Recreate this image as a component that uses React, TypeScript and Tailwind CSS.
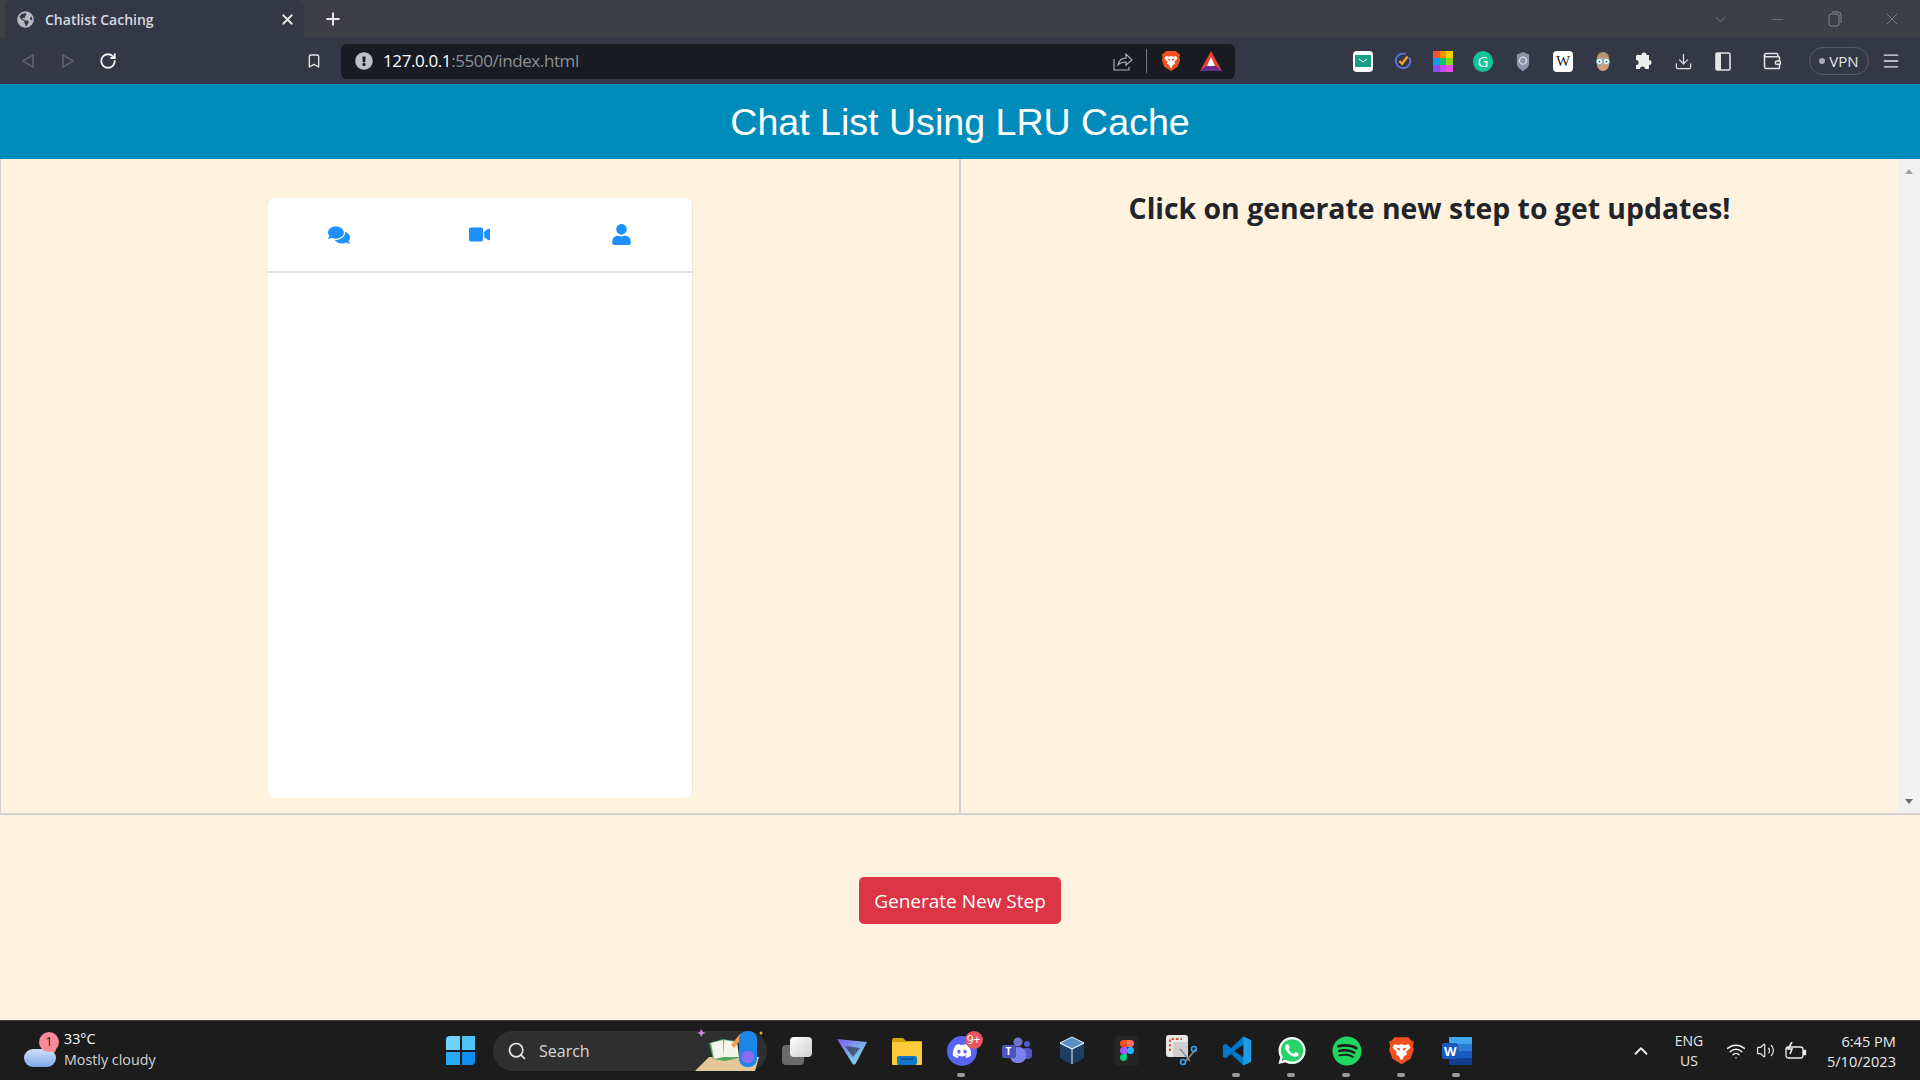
import React from "react";
import { FaComments, FaVideo, FaUser, FaDiscord, FaWhatsapp, FaSpotify, FaGlobeAmericas, FaExclamationCircle } from "react-icons/fa";
import { Plus, X, ChevronDown, ChevronUp, Minus, RotateCw, Bookmark, Download, Wallet, Menu, Search, Wifi, Volume2 } from "lucide-react";

const ui = { fontFamily: '"Open Sans", "Noto Sans", sans-serif' };

function Brave({ size = 24 }: { size?: number }) {
  return (
    <svg width={size} height={size * 1.1} viewBox="0 0 24 26">
      <path d="M6 1h12l3 3 2 1-1 4 1 3-3 8-8 5-8-5-3-8 1-3-1-4 2-1z" fill="#f1501e" />
      <path d="M6 7l3 1 3-1 3 1 3-1 2 3-4 4 1 2-3 2-1 3h-2l-1-3-3-2 1-2-4-4z" fill="#fff" />
      <path d="M7 10l4 1-1 2zM17 10l-4 1 1 2z" fill="#f1501e" />
    </svg>
  );
}

function ToolSlot({ children }: { children: React.ReactNode }) {
  return <div className="w-10 flex justify-center items-center shrink-0">{children}</div>;
}

function TaskSlot({ children, dot }: { children: React.ReactNode; dot?: boolean }) {
  return (
    <div className="w-[55px] h-full relative flex items-center justify-center shrink-0">
      {children}
      {dot && <div className="absolute bottom-[3px] left-[23px] w-2 h-[4px] rounded-full bg-[#9a9a9a]" />}
    </div>
  );
}

function TabStrip() {
  return (
    <div className="h-[38px] bg-[#3e3e47] flex items-end shrink-0">
      <div className="ml-[5px] w-[299px] h-[38px] bg-[#333746] rounded-t-md flex items-center text-[#d8dae0] pl-[12px] pr-[8px]">
        <FaGlobeAmericas size={17} className="text-[#b5b8c0]" />
        <span className="ml-[11px] text-[14px] font-semibold" style={ui}>Chatlist Caching</span>
        <X size={17} strokeWidth={2.5} className="ml-auto text-[#e8e8ea]" />
      </div>
      <div className="h-[38px] ml-[19px] flex items-center text-[#e8e8ea]"><Plus size={20} strokeWidth={2.4} /></div>
      <div className="ml-auto h-[38px] flex items-center text-[#85858e]">
        <div className="w-[57px] flex justify-center"><ChevronDown size={17} strokeWidth={1} /></div>
        <div className="w-[57px] flex justify-center"><Minus size={17} strokeWidth={1} /></div>
        <div className="w-[57px] flex justify-center">
          <svg width="14" height="17" viewBox="0 0 14 17" fill="none" stroke="currentColor"><rect x="1" y="3" width="10" height="12" rx="2" /><path d="M4 1h6a3 3 0 0 1 3 3v8" /></svg>
        </div>
        <div className="w-[57px] flex justify-center"><X size={20} strokeWidth={1} /></div>
      </div>
    </div>
  );
}

function Toolbar() {
  return (
    <div className="h-[46px] bg-[#333746] flex items-center shrink-0">
      <div className="ml-[8px] w-10 flex justify-center text-[#5f626d]">
        <svg width="14" height="16" viewBox="0 0 14 16" fill="none" stroke="currentColor" strokeWidth="1.6"><path d="M12 2v12L2 8z" strokeLinejoin="round" /></svg>
      </div>
      <div className="w-10 flex justify-center text-[#5f626d]">
        <svg width="14" height="16" viewBox="0 0 14 16" fill="none" stroke="currentColor" strokeWidth="1.6"><path d="M2 2v12l10-6z" strokeLinejoin="round" /></svg>
      </div>
      <div className="w-10 flex justify-center text-[#eeeef0]"><RotateCw size={18} strokeWidth={2.4} /></div>
      <div className="ml-[178px] w-4 flex justify-center text-[#e4e5e8]"><Bookmark size={18} strokeWidth={2} /></div>
      <div className="ml-[19px] w-[894px] h-[35px] bg-[#181b22] rounded-md flex items-center pl-[14px] pr-[12px]">
        <FaExclamationCircle size={18} className="text-[#bfc0c5]" />
        <span className="ml-[10px] text-[17px] tracking-[-0.4px] text-white" style={ui}>127.0.0.1<span className="text-[#8d8f96]">:5500/index.html</span></span>
        <div className="ml-auto flex items-center">
          <svg width="20" height="22" viewBox="0 0 20 22" fill="none" stroke="#b4b5ba" strokeWidth="1.1"><path d="M1 9v11h15v-3" /><path d="M5 15c1-5 4-7 8-7V4l6 6-6 5v-3c-3 0-6 1-8 3z" /></svg>
          <div className="ml-[13px] w-px h-6 bg-[#77787e]" />
          <div className="ml-[14px]"><Brave size={20} /></div>
          <svg className="ml-[18px]" width="24" height="24" viewBox="0 0 24 24"><path d="M12 2L23 22H1z" fill="#ef3f33" /><path d="M1 22l6-5h10l6 5z" fill="#662d91" /><path d="M12 8l4 9H8z" fill="#fff" /></svg>
        </div>
      </div>
      <div className="ml-[108px] flex items-center">
        <ToolSlot>
          <div className="w-5 h-[21px] rounded-sm bg-white flex items-center justify-center"><div className="w-4 h-3 bg-[#17a086] flex items-center justify-center"><svg width="10" height="6" viewBox="0 0 10 6" fill="none" stroke="#fff"><path d="M1 1l4 3 4-3" /></svg></div></div>
        </ToolSlot>
        <ToolSlot>
          <svg width="18" height="20" viewBox="0 0 20 22" fill="none"><path d="M17 7a8 8 0 1 1-4-3.500" stroke="#5a78e0" strokeWidth="2" /><path d="M6 11l3 3 6-8" stroke="#f5a623" strokeWidth="2.500" /></svg>
        </ToolSlot>
        <ToolSlot>
          <div className="w-5 h-[21px] grid grid-cols-3 grid-rows-3">
            <div className="bg-[#f2552c]" /><div className="bg-[#fb8c00]" /><div className="bg-[#fdd000]" />
            <div className="bg-[#1198f0]" /><div className="bg-[#0cc46c]" /><div className="bg-[#8bd11d]" />
            <div className="bg-[#8b4df0]" /><div className="bg-[#c04df5]" /><div className="bg-[#e84df0]" />
          </div>
        </ToolSlot>
        <ToolSlot>
          <div className="w-5 h-[21px] rounded-full bg-[#15c39a] flex items-center justify-center text-white text-[15px]" style={ui}>G</div>
        </ToolSlot>
        <ToolSlot>
          <svg width="16" height="21" viewBox="0 0 16 24"><path d="M8 1l7 3v10c0 5-4 7-7 9-3-2-7-4-7-9V4z" fill="#8a93a8" /><circle cx="8" cy="11" r="4" fill="none" stroke="#dfe3ea" strokeWidth="1.500" /></svg>
        </ToolSlot>
        <ToolSlot>
          <div className="w-5 h-[21px] rounded-sm bg-white text-[#222] text-[15px] flex items-center justify-center"><span style={{ fontFamily: '"Liberation Serif", serif' }}>W</span></div>
        </ToolSlot>
        <ToolSlot>
          <svg width="18" height="21" viewBox="0 0 20 24"><circle cx="10" cy="8" r="7" fill="#b8916a" /><ellipse cx="10" cy="15" rx="7" ry="8" fill="#cf9a80" /><circle cx="6" cy="12" r="3.500" fill="#fff" stroke="#59b5c9" /><circle cx="14" cy="12" r="3.500" fill="#fff" stroke="#59b5c9" /><circle cx="6" cy="12" r="1" fill="#333" /><circle cx="14" cy="12" r="1" fill="#333" /></svg>
        </ToolSlot>
        <ToolSlot>
          <svg width="18" height="20" viewBox="0 0 18 20" fill="#eceded"><path d="M5 4h2.500a2.500 2.500 0 1 1 5 0H15v5a2.500 2.500 0 1 1 0 5v4h-4a2.500 2.500 0 1 0-5 0H2v-4a2.500 2.500 0 1 0 0-5V6a2 2 0 0 1 3-2z" /></svg>
        </ToolSlot>
        <ToolSlot><Download size={19} strokeWidth={1.5} className="text-[#e4e5e8]" /></ToolSlot>
        <ToolSlot>
          <svg width="16" height="19" viewBox="0 0 16 19"><rect x="1" y="1" width="14" height="17" rx="1.500" fill="none" stroke="#e4e5e8" strokeWidth="1.600" /><rect x="1" y="1" width="5" height="17" fill="#e4e5e8" /></svg>
        </ToolSlot>
        <div className="w-[58px] flex justify-center"><Wallet size={20} strokeWidth={1.8} className="text-[#e4e5e8]" /></div>
        <div className="ml-[8px] w-[60px] h-[28px] rounded-full border border-[#575a68] flex items-center justify-center text-[#e4e5e8] text-[15px]" style={ui}>
          <span className="w-[6px] h-[6px] rounded-full bg-[#a8aab2] mr-[4px]" />VPN
        </div>
        <div className="ml-[6px] w-[32px] flex justify-center"><Menu size={20} strokeWidth={1.6} className="text-[#e4e5e8]" /></div>
      </div>
    </div>
  );
}

function Scrollbar() {
  return (
    <div className="w-[22px] bg-[#f1f1f1] flex flex-col justify-between items-center pt-[10px] pb-[9px] shrink-0">
      <div className="w-0 h-0 border-x-[4.5px] border-x-transparent border-b-[5px] border-b-[#a3a3a3]" />
      <div className="w-0 h-0 border-x-[4.5px] border-x-transparent border-t-[5px] border-t-[#6b6b6b]" />
    </div>
  );
}

function Panels() {
  return (
    <div className="h-[656px] flex border-b-2 border-[#d3d3d3] shrink-0">
      <div className="w-[961px] border-l border-r-2 border-[#d3d3d3] pl-[267px] pt-[39px] shrink-0">
        <div className="w-[425px] h-[600px] bg-white rounded-lg border-r border-[#e8e8e8]">
          <div className="h-[75px] border-b-2 border-[#e0e0e0] flex items-center text-[#1e90ff]">
            <div className="flex-1 flex justify-center"><FaComments size={22} /></div>
            <div className="flex-1 flex justify-center"><FaVideo size={21} /></div>
            <div className="flex-1 flex justify-center"><FaUser size={21} /></div>
          </div>
        </div>
      </div>
      <div className="flex-1 text-center pt-[28px]">
        <h2 className="text-[28.4px] font-bold text-[#212529] leading-[42px]" style={ui}>Click on generate new step to get updates!</h2>
      </div>
      <Scrollbar />
    </div>
  );
}

function Taskbar() {
  return (
    <div className="h-[60px] bg-[#1c1c1c] border-t border-[#3a3a3a] flex items-center shrink-0 text-white relative" style={ui}>
      <div className="w-[433px] h-full flex items-center pl-[24px] shrink-0">
        <div className="relative w-[40px] h-[40px]">
          <div className="absolute left-[24px] top-[14px] w-[8px] h-[8px] rounded-full bg-[#e8862a]" />
          <div className="absolute left-0 bottom-[4px] w-[32px] h-[18px] rounded-full bg-gradient-to-b from-[#cfe0f7] to-[#7fa8e8]" />
          <div className="absolute left-[15px] top-[1px] w-[20px] h-[20px] rounded-full bg-[#f98b97] text-[#222] text-[13px] flex items-center justify-center">1</div>
        </div>
        <div className="text-[14.3px] leading-[21px] mb-[3px]">
          <div>33°C</div>
          <div className="text-[#d4d4d4]">Mostly cloudy</div>
        </div>
      </div>
      <div className="w-[55px] h-full flex items-center justify-center shrink-0">
        <div className="w-[29px] h-[29px] grid grid-cols-2 gap-[2px]">
          <div className="bg-[#6fd3fb] rounded-tl-sm" /><div className="bg-[#4fc3f7]" /><div className="bg-[#29a8f5]" /><div className="bg-[#0f8cf0] rounded-br-sm" />
        </div>
      </div>
      <div className="ml-[5px] w-[274px] h-[40px] rounded-full bg-[#2f2f2f] flex items-center pl-[14px] relative shrink-0">
        <Search size={20} strokeWidth={2} className="text-[#e8e8e8]" />
        <span className="ml-[12px] text-[16px] text-[#d8d8d8]">Search</span>
        <svg className="absolute right-0 -top-[6px]" width="72" height="46" viewBox="0 0 72 46">
          <path d="M0 46l14-14h50l-4 14z" fill="#e6c79c" />
          <path d="M14 18l14-4 12 2 4 17-14 3-12-2z" fill="#4fa661" />
          <path d="M16 18l12-3 1 17-10 2zM29 15l13 2 2 15-15 0z" fill="#f3f5e8" />
          <path d="M36 20l9-11 3 3-9 11z" fill="#f5a04a" />
          <rect x="44" y="6" width="18" height="36" rx="8" fill="#1b86e8" />
          <rect x="47" y="26" width="12" height="12" rx="5" fill="#8a6cf5" />
          <circle cx="66" cy="8" r="1.500" fill="#f5a623" />
          <path d="M6 4l2 3 3 1-3 1-2 3-1-3-3-1 3-1z" fill="#d77be8" />
        </svg>
      </div>
      <div className="ml-[2px] h-full flex items-center">
        <TaskSlot>
          <div className="relative w-[30px] h-[28px]">
            <div className="absolute left-0 bottom-0 w-[22px] h-[20px] rounded-sm bg-[#6a6a6a]" />
            <div className="absolute right-0 top-0 w-[22px] h-[20px] rounded-sm bg-gradient-to-br from-white to-[#cfcfcf]" />
          </div>
        </TaskSlot>
        <TaskSlot>
          <svg width="30" height="28" viewBox="0 0 30 28"><defs><linearGradient id="pv" x1="0" y1="0" x2="1" y2="1"><stop offset="0" stopColor="#7b5cf0" /><stop offset="1" stopColor="#7df0e6" /></linearGradient></defs><path d="M0 2l30 3-11 21c-1 2-3 2-4 0z" fill="url(#pv)" /><path d="M8 9l15 2-7 9z" fill="#1c1c1c" opacity="0.55" /></svg>
        </TaskSlot>
        <TaskSlot>
          <svg width="30" height="28" viewBox="0 0 30 28"><path d="M0 3a2 2 0 0 1 2-2h9l3 3h16v6H0z" fill="#d9a200" /><rect x="0" y="5" width="30" height="23" rx="1" fill="#fbcb3c" /><rect x="5" y="19" width="20" height="9" rx="2" fill="#0f78c9" /><rect x="9" y="21" width="12" height="2" fill="#0a5a99" /></svg>
        </TaskSlot>
        <TaskSlot dot>
          <div className="relative w-[30px] h-[30px] rounded-full bg-[#5865f2] flex items-center justify-center">
            <FaDiscord size={20} className="text-white" />
            <div className="absolute -top-[5px] -right-[6px] h-[18px] w-[18px] rounded-full bg-[#e8555c] text-white text-[12px] leading-[18px] text-center">9+</div>
          </div>
        </TaskSlot>
        <TaskSlot>
          <svg width="30" height="28" viewBox="0 0 30 28"><circle cx="16" cy="5" r="4.500" fill="#6f75c9" /><circle cx="25" cy="7" r="3" fill="#5059c9" /><rect x="20" y="11" width="10" height="11" rx="4" fill="#5059c9" /><rect x="8" y="10" width="16" height="16" rx="7" fill="#7b83eb" /><rect x="0" y="8" width="14" height="13" rx="2" fill="#4b53bc" /><text x="3.500" y="18" fontSize="10" fontWeight="700" fill="#fff" fontFamily="Open Sans">T</text></svg>
        </TaskSlot>
        <TaskSlot>
          <svg width="26" height="30" viewBox="0 0 26 30"><path d="M13 1l12 6v15l-12 7-12-7V7z" fill="#1d3f63" /><path d="M13 1l12 6-12 6L1 7z" fill="#5c8fc4" stroke="#e8eef5" /><path d="M13 13v15" stroke="#e8eef5" /><path d="M1 7l12 6 12-6" fill="none" stroke="#e8eef5" /></svg>
        </TaskSlot>
        <TaskSlot>
          <div className="w-[24px] h-[30px] bg-[#252525] rounded-sm flex items-center justify-center">
            <svg width="14" height="22" viewBox="0 0 14 22"><path d="M3.500 0H7v7H3.500a3.500 3.500 0 0 1 0-7z" fill="#f24e1e" /><path d="M7 0h3.500a3.500 3.500 0 0 1 0 7H7z" fill="#ff7262" /><path d="M3.500 7H7v7H3.500a3.500 3.500 0 0 1 0-7z" fill="#a259ff" /><circle cx="10.500" cy="10.500" r="3.500" fill="#1abcfe" /><path d="M3.500 14H7v4a3.500 3.500 0 1 1-3.500-4z" fill="#0acf83" /></svg>
          </div>
        </TaskSlot>
        <TaskSlot>
          <svg width="31" height="31" viewBox="0 0 31 31"><rect x="0" y="0" width="22" height="22" rx="3" fill="#e8e8e8" /><rect x="7" y="7" width="15" height="15" fill="#cfcfcf" /><path d="M4 16V4h12" fill="none" stroke="#e2543f" strokeWidth="2" strokeDasharray="2.500 2" /><path d="M14 14l10 12M30 14L20 26" stroke="#8e8e8e" strokeWidth="1.500" /><circle cx="17" cy="27" r="2.500" fill="none" stroke="#3a9ee8" strokeWidth="1.600" /><circle cx="28" cy="14" r="2.500" fill="none" stroke="#3a9ee8" strokeWidth="1.600" /></svg>
        </TaskSlot>
        <TaskSlot dot>
          <svg width="30" height="30" viewBox="0 0 100 100"><path d="M71 2L30 40 12 26 3 31v38l9 5 18-14 41 38 26-12V14z" fill="#0078c8" /><path d="M71 2l26 12v72L71 98z" fill="#1f9ce8" /><path d="M71 29L40 50l31 21z" fill="#1c1c1c" /></svg>
        </TaskSlot>
        <TaskSlot dot>
          <div className="relative w-[30px] h-[30px] flex items-center justify-center">
            <div className="absolute inset-[2px] rounded-full bg-[#25d366]" />
            <FaWhatsapp size={31} className="relative text-white" />
          </div>
        </TaskSlot>
        <TaskSlot dot><FaSpotify size={30} className="text-[#1ed760]" /></TaskSlot>
        <TaskSlot dot><Brave size={27} /></TaskSlot>
        <TaskSlot dot>
          <svg width="30" height="28" viewBox="0 0 30 28"><rect x="7" y="0" width="23" height="28" rx="2" fill="#2b7cd3" /><rect x="7" y="0" width="23" height="7" fill="#41a5ee" /><rect x="7" y="14" width="23" height="7" fill="#185abd" /><rect x="7" y="21" width="23" height="7" fill="#103f91" /><rect x="0" y="6" width="16" height="16" rx="2" fill="#185abd" /><text x="2" y="19" fontSize="13" fontWeight="700" fill="#fff" fontFamily="Open Sans">W</text></svg>
        </TaskSlot>
      </div>
      <div className="ml-[145px] w-[24px] flex justify-center"><ChevronUp size={22} strokeWidth={2} className="text-[#eeeeee]" /></div>
      <div className="ml-[11px] w-[50px] text-center text-[14px] leading-[20px] text-[#e8e8e8]"><div>ENG</div><div>US</div></div>
      <div className="ml-[12px] flex items-center gap-[10px] text-[#eeeeee]">
        <Wifi size={20} strokeWidth={1.8} />
        <Volume2 size={19} strokeWidth={1.5} />
        <svg width="22" height="18" viewBox="0 0 22 18" fill="none" stroke="#eeeeee" strokeWidth="1.300"><rect x="1" y="5" width="17" height="11" rx="2.500" /><rect x="18.500" y="8.500" width="2" height="4" fill="#eeeeee" /><path d="M7 0L3 7h4l-2 5" strokeWidth="1.600" /></svg>
      </div>
      <div className="ml-auto pr-[24px] text-right text-[14.6px] leading-[20px] text-[#e8e8e8]"><div>6:45 PM</div><div>5/10/2023</div></div>
    </div>
  );
}

export default function App() {
  return (
    <div className="w-[1920px] h-[1080px] flex flex-col overflow-hidden bg-[#fff2df]">
      <TabStrip />
      <Toolbar />
      <div className="h-[75px] pt-[2px] bg-[#008cba] flex items-center justify-center shrink-0 text-white text-[37.6px]" style={{ fontFamily: '"Liberation Sans", sans-serif' }}>Chat List Using LRU Cache</div>
      <Panels />
      <div className="flex-1 flex justify-center pt-[62px]">
        <button className="w-[202px] h-[47px] pt-[1px] rounded-[5px] bg-[#dc3545] text-white text-[19px]" style={ui}>Generate New Step</button>
      </div>
      <Taskbar />
    </div>
  );
}
